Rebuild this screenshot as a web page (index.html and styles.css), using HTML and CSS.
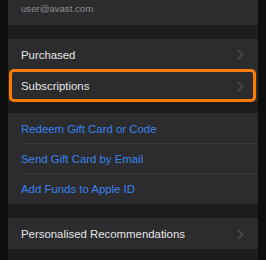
FILE: index.html
```html
<!DOCTYPE html>
<html>
<head>
<meta charset="utf-8">
<link rel="stylesheet" href="styles.css">
</head>
<body>
<div class="screen">
  <div class="email-row"><span class="email">user@avast.com</span></div>
  <div class="gap g1"></div>
  <div class="group">
    <div class="row"><div class="inner sep"><span class="label">Purchased</span><svg class="chev" width="7" height="11" viewBox="0 0 7 11"><path d="M1 1 L5.5 5.5 L1 10" fill="none" stroke="#505054" stroke-width="1.4"/></svg></div></div>
    <div class="row tall highlighted"><div class="inner"><span class="label">Subscriptions</span><svg class="chev" width="7" height="11" viewBox="0 0 7 11"><path d="M1 1 L5.5 5.5 L1 10" fill="none" stroke="#505054" stroke-width="1.4"/></svg></div><div class="outline"></div></div>
  </div>
  <div class="gap g2"></div>
  <div class="group">
    <div class="row"><div class="inner sep"><span class="link">Redeem Gift Card or Code</span></div></div>
    <div class="row"><div class="inner sep"><span class="link">Send Gift Card by Email</span></div></div>
    <div class="row"><div class="inner"><span class="link">Add Funds to Apple ID</span></div></div>
  </div>
  <div class="gap g3"></div>
  <div class="group">
    <div class="row"><div class="inner"><span class="label">Personalised Recommendations</span><svg class="chev" width="7" height="11" viewBox="0 0 7 11"><path d="M1 1 L5.5 5.5 L1 10" fill="none" stroke="#505054" stroke-width="1.4"/></svg></div></div>
  </div>
</div>
</body>
</html>
```
FILE: styles.css
```css
html, body {
  margin: 0;
  padding: 0;
  background: #0e0e0e;
  height: 260px;
  overflow: hidden;
}
.screen {
  margin: 0 8px;
  width: 250px;
  height: 260px;
  background: #1c1c1e;
  font-family: "Liberation Sans", Arial, sans-serif;
}
.email-row {
  height: 25px;
  background: #2c2c2e;
  padding-left: 13px;
  box-sizing: border-box;
  display: flex;
  align-items: flex-start;
}
.email {
  font-size: 9.6px;
  color: #8e8e93;
  line-height: 17px;
}
.gap.g1 { height: 14px; }
.gap.g2 { height: 11px; }
.gap.g3 { height: 14px; }
.group {
  background: #2c2c2e;
}
.row {
  position: relative;
  height: 30px;
  padding-left: 13px;
  display: flex;
}
.row:first-child { height: 31px; }
.row:first-child .inner { padding-top: 1px; }
.row.tall { height: 32px; }
.inner {
  flex: 1;
  display: flex;
  align-items: center;
  justify-content: space-between;
  padding-right: 14px;
}
.inner.sep {
  border-bottom: 1px solid #3a3a3c;
}
.label {
  font-size: 11.4px;
  color: #e6e6e6;
}
.link {
  font-size: 11.4px;
  color: #3b82ee;
}
.chev {
  display: block;
}
.outline {
  position: absolute;
  left: 1px;
  right: 2px;
  top: -1.5px;
  bottom: 0.5px;
  border: 3.5px solid #ff7c00;
  border-radius: 5px;
}
```
